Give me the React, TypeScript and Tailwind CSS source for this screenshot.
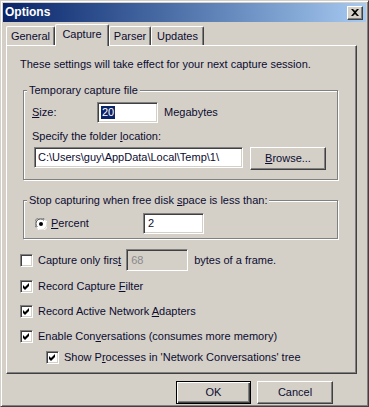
import type { ReactNode } from "react";

const raised =
  "border border-t-white border-l-white border-r-[#404040] border-b-[#404040] shadow-[inset_-1px_-1px_0_#808080]";
const sunken =
  "border border-t-[#808080] border-l-[#808080] border-r-white border-b-white shadow-[inset_1px_1px_0_#404040,inset_-1px_-1px_0_#d4d0c8]";

export default function App() {
  return (
    <div className="h-[407px] w-[369px] overflow-hidden bg-[#d4d0c8] font-['Liberation_Sans',Arial,sans-serif] text-[11px] leading-[13px] text-[#0c0c30]">
      <div className="h-full w-full border border-t-[#d4d0c8] border-l-[#d4d0c8] border-r-[#404040] border-b-[#404040] p-[2px] shadow-[inset_1px_1px_0_#fff,inset_-1px_-1px_0_#808080]">
        <TitleBar />
        <div className="pl-[3px]">
          <Tabs />
          <div className={`h-[329px] w-[351px] pl-[13px] pt-[12px] ${raised}`}>
            <p>These settings will take effect for your next capture session.</p>

            <Group label="Temporary capture file" className="mt-[13px]">
              <div className="pb-[9px] pl-[8px] pt-[5px]">
                <div className="flex h-[21px] items-center">
                  <span className="w-[65px]">
                    <u>S</u>ize:
                  </span>
                  <div className={`flex h-[21px] w-[61px] items-center bg-white pl-[3px] ${sunken}`}>
                    <span className="bg-[#0a246a] px-[1px] text-white">20</span>
                  </div>
                  <span className="ml-[6px]">Megabytes</span>
                </div>
                <p className="mt-[7px]">
                  Specify the folder <u>l</u>ocation:
                </p>
                <div className="mt-[4px] flex items-start">
                  <div className={`ml-[2px] flex h-[21px] w-[209px] items-center bg-white pl-[3px] ${sunken}`}>
                    C:\Users\guy\AppData\Local\Temp\1\
                  </div>
                  <Button className="ml-[7px] h-[23px] w-[76px]">
                    <u>B</u>rowse...
                  </Button>
                </div>
              </div>
            </Group>

            <Group label={<>Stop capturing when free disk <u>s</u>pace is less than:</>} className="mt-[14px]">
              <div className="flex items-center pb-[4px] pl-[11px] pt-[6px]">
                <div className="flex w-[108px] items-center">
                  <Radio />
                  <span className="ml-[4px]">
                    <u>P</u>ercent
                  </span>
                </div>
                <div className={`flex h-[21px] w-[61px] items-center bg-white pl-[4px] ${sunken}`}>2</div>
              </div>
            </Group>

            <div className="mt-[10px] flex h-[22px] items-center">
              <Checkbox />
              <span className="ml-[5px]">
                Capture only firs<u>t</u>
              </span>
              <div className={`ml-[5px] flex h-[22px] w-[62px] items-center pl-[4px] text-[#8a8a8a] ${sunken}`}>68</div>
              <span className="ml-[6px]">bytes of a frame.</span>
            </div>
            <CheckRow className="mt-[9px]">
              Record Capture <u>F</u>ilter
            </CheckRow>
            <CheckRow className="mt-[12px]">
              Record Active Network <u>A</u>dapters
            </CheckRow>
            <CheckRow className="mt-[12px]">
              Enable Con<u>v</u>ersations (consumes more memory)
            </CheckRow>
            <CheckRow className="ml-[26px] mt-[8px]">
              Show P<u>r</u>ocesses in 'Network Conversations' tree
            </CheckRow>
          </div>

          <div className="ml-[170px] mt-[7px] flex gap-[6px]">
            <button className="h-[23px] w-[75px] border border-black text-center shadow-[inset_1px_1px_0_#fff,inset_-1px_-1px_0_#404040,inset_-2px_-2px_0_#808080]">
              OK
            </button>
            <Button className="h-[23px] w-[76px]">Cancel</Button>
          </div>
        </div>
      </div>
    </div>
  );
}

function TitleBar() {
  return (
    <div className="flex h-[19px] items-center justify-between bg-gradient-to-r from-[#0a246a] to-[#a6caf0] pl-[2px] pr-[3px]">
      <span className="text-[12px] font-bold leading-[15px] text-white">Options</span>
      <div className={`flex h-[14px] w-[16px] items-center justify-center bg-[#d4d0c8] ${raised}`}>
        <svg width="8" height="7" viewBox="0 0 8 7">
          <path d="M0 0h2l2 2 2-2h2L5 3.5 8 7H6L4 5 2 7H0l3-3.5z" fill="#000" />
        </svg>
      </div>
    </div>
  );
}

function Tabs() {
  const tab = "mb-[1px] flex h-[19px] items-center justify-center rounded-t-[2px] border border-b-0 border-t-white border-l-white border-r-[#404040] shadow-[inset_-1px_0_0_#808080]";
  return (
    <div className="relative z-10 -mb-[1px] mt-[2px] flex h-[22px] items-end">
      <div className={`${tab} w-[49px]`}>General</div>
      <div className="flex h-[22px] w-[54px] items-center justify-center rounded-t-[2px] border border-b-0 border-t-white border-l-white border-r-[#404040] bg-[#d4d0c8] pb-[3px] shadow-[inset_-1px_0_0_#808080]">
        Capture
      </div>
      <div className={`${tab} w-[42px]`}>Parser</div>
      <div className={`${tab} w-[53px]`}>Updates</div>
    </div>
  );
}

function Group({ label, className, children }: { label: ReactNode; className?: string; children: ReactNode }) {
  return (
    <fieldset
      className={`ml-[3px] w-[315px] border border-[#808080] p-0 shadow-[1px_1px_0_#fff,inset_1px_1px_0_#fff] ${className ?? ""}`}
    >
      <legend className="ml-[3px] bg-[#d4d0c8] px-[2px] leading-[13px]">{label}</legend>
      {children}
    </fieldset>
  );
}

function Button({ className, children }: { className?: string; children: ReactNode }) {
  return <button className={`flex items-center justify-center ${raised} ${className ?? ""}`}>{children}</button>;
}

function Checkbox({ checked = false }: { checked?: boolean }) {
  return (
    <div className={`relative h-[13px] w-[13px] shrink-0 bg-white ${sunken}`}>
      {checked && (
        <svg className="absolute -left-[1px] -top-[1px]" width="13" height="13" viewBox="0 0 13 13">
          <path d="M3 5l2 2 4-4v3l-4 4-2-2z" fill="#000" />
        </svg>
      )}
    </div>
  );
}

function CheckRow({ className, children }: { className?: string; children: ReactNode }) {
  return (
    <div className={`flex h-[13px] items-center ${className ?? ""}`}>
      <Checkbox checked />
      <span className="ml-[5px]">{children}</span>
    </div>
  );
}

function Radio() {
  return (
    <svg width="12" height="12" viewBox="0 0 12 12" className="shrink-0">
      <circle cx="6" cy="6" r="5.5" fill="#fff" />
      <path d="M1.2 9.5A5.5 5.5 0 0 1 9.5 1.2" fill="none" stroke="#808080" />
      <path d="M2.3 9A4.5 4.5 0 0 1 9 2.3" fill="none" stroke="#404040" />
      <path d="M10.8 2.5A5.5 5.5 0 0 1 2.5 10.8" fill="none" stroke="#fff" />
      <circle cx="6" cy="6" r="2" fill="#000" />
    </svg>
  );
}
